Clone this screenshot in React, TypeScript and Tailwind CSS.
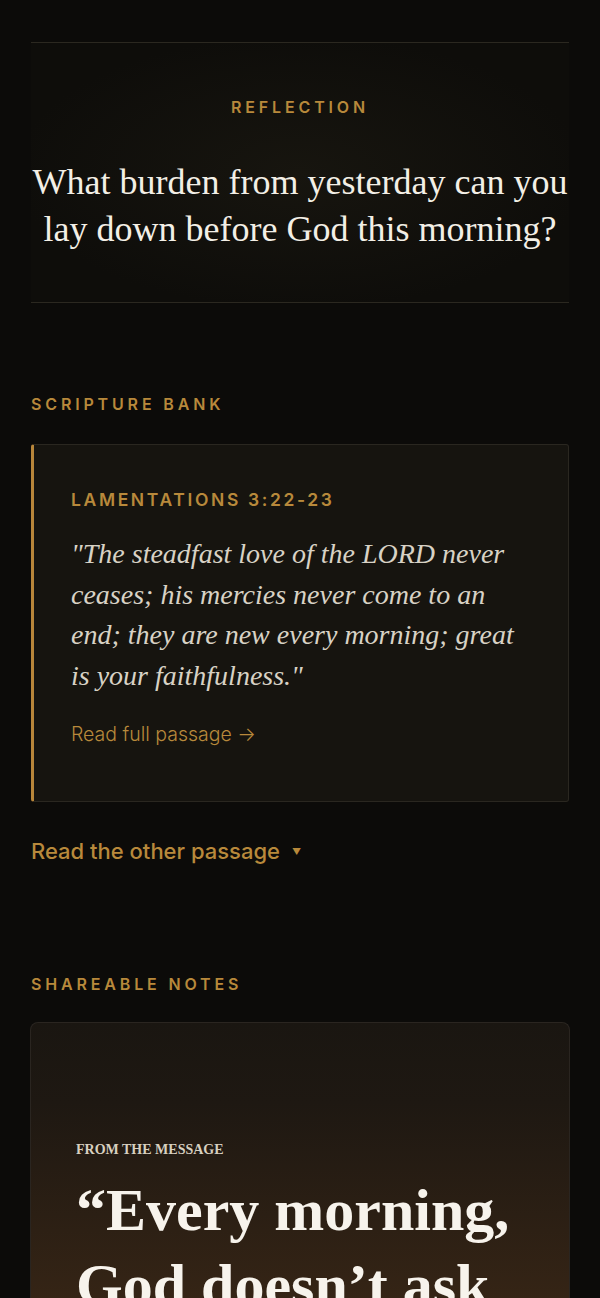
import React from "react";

export default function App() {
  const sans = { fontFamily: "Inter, 'Noto Sans', sans-serif" };
  const serif = { fontFamily: "'Liberation Serif', 'DejaVu Serif', serif" };
  return (
    <div className="min-h-[1298px] w-[600px] overflow-hidden bg-[#0c0b09] px-[31px] pt-[42px]" style={sans}>
      <section className="border-y border-[#2b2820] bg-[radial-gradient(ellipse_at_center,#17150f_0%,#0e0d0a_75%)] pt-[56px] pb-[49px] text-center">
        <div className="text-[16px] leading-[16px] font-semibold tracking-[0.24em] text-[#b8893b]">REFLECTION</div>
        <h2 className="mt-[44px] text-[36px] leading-[47px] text-[#f3efe6]" style={serif}>
          What burden from yesterday can you lay down before God this morning?
        </h2>
      </section>

      <div className="mt-[91px] text-[16px] leading-[20px] font-semibold tracking-[0.24em] text-[#b8893b]">SCRIPTURE BANK</div>

      <div className="mt-[30px] rounded-[3px] border border-[#2a2720] border-l-[3px] border-l-[#b8863a] bg-[#16140f] pl-[37px] pr-[36px] pt-[43px] pb-[53px]">
        <div className="text-[17.5px] leading-[24px] font-semibold tracking-[0.15em] text-[#b8893b]">LAMENTATIONS 3:22-23</div>
        <p className="mt-[22px] text-[28px] leading-[40.5px] italic text-[#d8d2c5]" style={serif}>
          "The steadfast love of the LORD never ceases; his mercies never come to an end; they are new every morning; great is your faithfulness."
        </p>
        <div className="mt-[24px] text-[19.5px] leading-[28px] font-light text-[#b8893b]">Read full passage →</div>
      </div>

      <div className="mt-[35px] flex items-center text-[22px] leading-[28px] font-medium text-[#b8893b]">
        Read the other passage
        <span className="ml-[12px] text-[9px] leading-none">▼</span>
      </div>

      <div className="mt-[109px] text-[16px] leading-[20px] font-semibold tracking-[0.24em] text-[#b8893b]">SHAREABLE NOTES</div>

      <div className="mt-[28px] -mx-px h-[320px] rounded-t-[8px] border border-b-0 border-[#2a2520] bg-[linear-gradient(180deg,#1a1611_0%,#1e1812_25%,#3a2716_100%)] px-[45px] pt-[118px]">
        <div className="text-[14px] leading-[18px] font-bold text-[#d8d0c0]" style={serif}>FROM THE MESSAGE</div>
        <div className="mt-[14px] text-[60px] leading-[75px] font-bold text-[#f7f3ec]" style={serif}>
          “Every morning, God doesn’t ask
        </div>
      </div>
    </div>
  );
}
